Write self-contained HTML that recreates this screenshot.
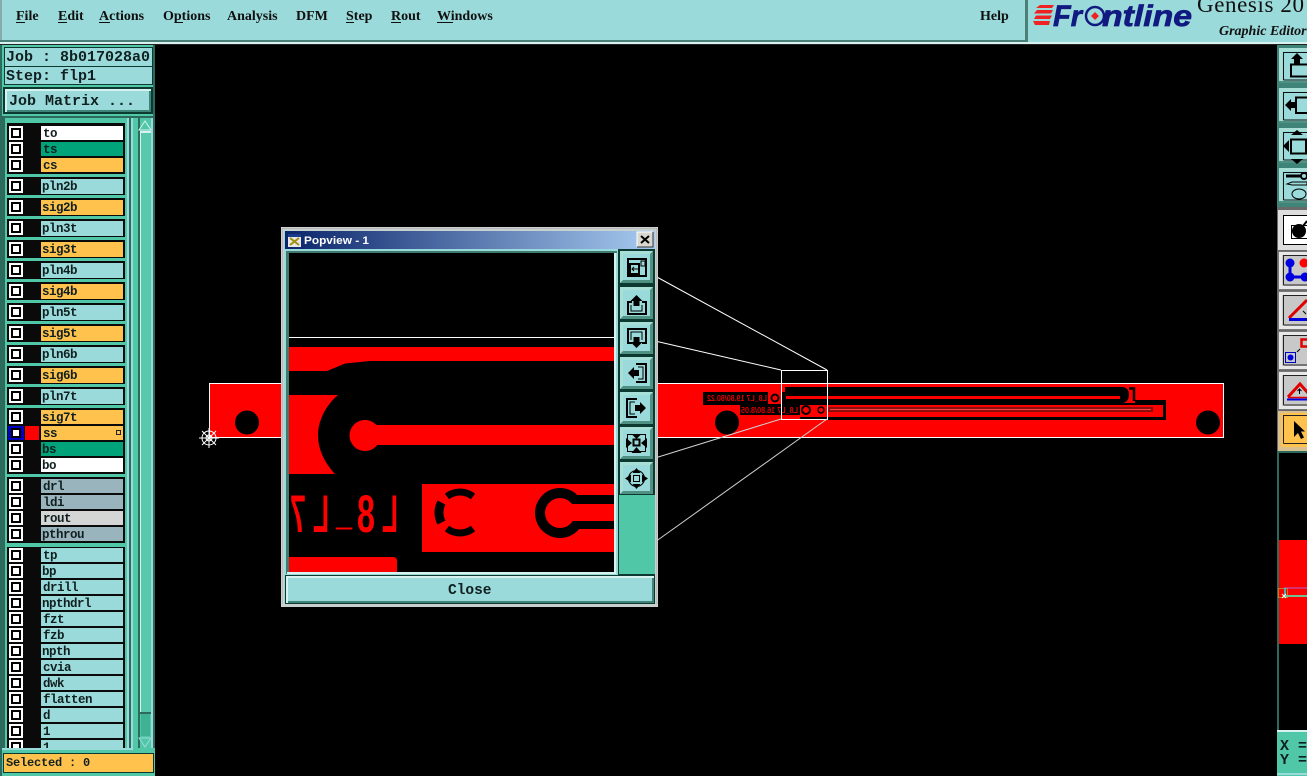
<!DOCTYPE html>
<html><head><meta charset="utf-8"><title>Genesis 2000 Graphic Editor</title>
<style>
html,body{margin:0;padding:0;background:#000;width:1307px;height:776px;overflow:hidden}
svg{display:block;position:absolute;left:0;top:0}
.m{font:bold 14px "Liberation Serif",serif;fill:#101010}
.l{font:bold 12.5px "Liberation Mono",monospace;fill:#102020;letter-spacing:-.5px}
.j{font:bold 15px "Liberation Mono",monospace;fill:#102020;letter-spacing:0}
.k{fill:none;stroke:#000;stroke-width:2}
</style></head><body>
<svg width="1307" height="776" viewBox="0 0 1307 776" xmlns="http://www.w3.org/2000/svg">
<defs>
<g id="cb"><rect x="9" y="-7" width="14" height="14" fill="#fff"/><rect x="11" y="-5" width="10" height="10" fill="#000"/><rect x="13" y="-3" width="6" height="6" fill="#fff"/></g>
<g id="b"><rect x="-19" y="-18" width="37" height="35" fill="#0c3a30"/><rect x="-17" y="-16" width="33" height="32" fill="#4f9284"/><path d="M-17 16V-16H16L13 -13H-14V13Z" fill="#a8e0d8"/><rect x="-14" y="-13" width="27" height="26" fill="#9bdada"/></g>
<g id="rb"><rect x="0" y="0" width="30" height="38" fill="#3f8478"/><rect x="1" y="1" width="29" height="35" fill="#a8e0d8"/><rect x="4" y="4" width="26" height="30" fill="#9bdada"/><rect x="1" y="34" width="29" height="2" fill="#4f9284"/><path d="M5.500 33V5.500H30M5.500 33H30" fill="none" stroke="#111" stroke-width="1"/></g>
<g id="gb"><rect x="0" y="0" width="30" height="39" fill="#777"/><rect x="1" y="1" width="29" height="37" fill="#e8e8e8"/><rect x="4" y="4" width="26" height="31" fill="#c8c8c8"/><path d="M5.500 34V4.500H30M5.500 34H30" fill="none" stroke="#222" stroke-width="1"/></g>
</defs>

<rect width="1307" height="776" fill="#000"/>

<!-- board -->
<rect x="209.500" y="383.500" width="1014" height="54" fill="#ff0000" stroke="#fff" stroke-width="1"/>
<circle cx="247" cy="422.500" r="12" fill="#000"/><circle cx="727" cy="422.500" r="12" fill="#000"/><circle cx="1208" cy="422.500" r="12" fill="#000"/>
<path d="M703 392H785V387H1123Q1129 388 1129 395Q1129 401 1123 403H1135V400H1166V420H800V415H740V405H703Z" fill="#000"/>
<path d="M1129 388.500H1134V401" fill="none" stroke="#000" stroke-width="2.500"/>
<rect x="786" y="396" width="334" height="3" fill="#ff0000"/>
<rect x="768" y="392" width="13" height="12" fill="#ff0000"/><circle cx="775" cy="398" r="3.500" fill="none" stroke="#000" stroke-width="2"/>
<rect x="800" y="405" width="363" height="12" fill="#ff0000"/>
<rect x="828" y="407" width="325" height="5" fill="#8a1010"/><rect x="830" y="409" width="321" height="1" fill="#ff4040"/>
<circle cx="806" cy="410" r="4" fill="none" stroke="#000" stroke-width="2"/><circle cx="821" cy="410" r="3" fill="none" stroke="#000" stroke-width="1.500"/>
<g font-family="Liberation Sans,sans-serif" font-size="8" font-weight="bold" fill="#e00000">
<text transform="translate(767,401) scale(-1,1)" textLength="60" lengthAdjust="spacingAndGlyphs">L8_L7 19.80/80.22</text>
<text transform="translate(798,413) scale(-1,1)" textLength="57" lengthAdjust="spacingAndGlyphs">L8_L7 16.80/8.05</text>
</g>

<!-- zoom lines -->
<g stroke="#fff" stroke-width="1" fill="none">
<path d="M781.500 370.500H827.500V419.500H781.500Z"/>
<path d="M655 276L827 370"/><path d="M655 341L781 370"/>
<path d="M655 458L781 419" stroke="#d0d0d0"/><path d="M655 542L827 419" stroke="#d0d0d0"/>
</g>

<!-- origin crosshair -->
<g stroke="#fff" stroke-width="1" fill="none"><circle cx="209" cy="438" r="7"/><circle cx="209" cy="438" r="3"/><path d="M199 438H219M209 428V448M202 431L216 445M216 431L202 445"/></g>

<!-- top menu bar -->
<rect width="1307" height="42" fill="#9bdada"/>
<rect x="0" y="0" width="2" height="42" fill="#8aa"/>
<rect x="0" y="40" width="1025" height="2" fill="#4a8078"/>
<rect x="1025" y="0" width="3" height="44" fill="#4a8078"/>
<rect x="0" y="42" width="1307" height="2" fill="#d8f2f0"/>
<rect x="0" y="44" width="1307" height="1" fill="#222"/>
<text class="m" x="16" y="20">File</text><text class="m" x="58" y="20">Edit</text><text class="m" x="99" y="20">Actions</text><text class="m" x="163" y="20">Options</text><text class="m" x="227" y="20">Analysis</text><text class="m" x="296" y="20">DFM</text><text class="m" x="346" y="20">Step</text><text class="m" x="391" y="20">Rout</text><text class="m" x="437" y="20">Windows</text><text class="m" x="980" y="20">Help</text>
<g fill="#101010"><rect x="16" y="22" width="9" height="1"/><rect x="58" y="22" width="9" height="1"/><rect x="99" y="22" width="11" height="1"/><rect x="176" y="22" width="7" height="1"/><rect x="346" y="22" width="8" height="1"/><rect x="391" y="22" width="10" height="1"/><rect x="437" y="22" width="16" height="1"/></g>

<!-- logo -->
<g fill="#ee2222"><path d="M1040 5H1054L1052 8H1036Z"/><path d="M1037 10H1053L1051 13.500H1034Z"/><path d="M1036 15.500H1052L1050 19H1034Z"/><path d="M1033 21H1050L1049 25H1035Z"/></g>
<g font-family="Liberation Sans,sans-serif" font-weight="bold" font-style="italic" font-size="30" fill="#101a80" stroke="#101a80" stroke-width=".7">
<text x="1053" y="26" textLength="29" lengthAdjust="spacingAndGlyphs">Fr</text>
<text x="1102" y="26" textLength="90" lengthAdjust="spacingAndGlyphs">ntline</text>
</g>
<circle cx="1095" cy="16" r="9" fill="none" stroke="#101a80" stroke-width="2.500"/><path d="M1095 12l4 4-4 4-4-4z" fill="#ee2222"/>
<text x="1197" y="12" font-family="Liberation Serif,serif" font-size="23" fill="#101010" letter-spacing=".6">Genesis 20</text>
<text x="1219" y="35" font-family="Liberation Serif,serif" font-size="14" font-weight="bold" font-style="italic" fill="#101010">Graphic Editor</text>

<!-- left panel -->
<rect x="0" y="45" width="155" height="731" fill="#50c8a8"/>
<rect x="0" y="45" width="2" height="731" fill="#2d6a5e"/>
<rect x="153" y="45" width="2" height="731" fill="#2d6a5e"/>
<rect x="4" y="47" width="149" height="20" fill="#0c3a30"/><rect x="5" y="48" width="147" height="18" fill="#9bdada"/>
<rect x="4" y="66" width="149" height="19" fill="#0c3a30"/><rect x="5" y="67" width="147" height="17" fill="#9bdada"/>
<text class="j" x="6" y="61">Job : 8b017028a0</text>
<text class="j" x="6" y="80">Step: flp1</text>
<rect x="3" y="87" width="150" height="27" fill="#0c3a30"/><rect x="5" y="89" width="146" height="23" fill="#d8f2f0"/><rect x="7" y="91" width="144" height="21" fill="#3f8478"/><rect x="7" y="91" width="142" height="19" fill="#9bdada"/>
<text class="j" x="9" y="105">Job Matrix ...</text>

<rect x="0" y="116" width="155" height="2" fill="#2d6a5e"/>
<rect x="0" y="118" width="5" height="632" fill="#2d6a5e"/>
<rect x="125" y="118" width="2" height="630" fill="#50c8a8"/>
<rect x="127" y="118" width="2" height="630" fill="#9bdada"/>
<rect x="129" y="118" width="2" height="630" fill="#2d6a5e"/>
<rect x="131" y="118" width="2" height="630" fill="#9bdada"/>
<rect x="133" y="118" width="5" height="630" fill="#50c8a8"/>
<rect x="138" y="118" width="2" height="630" fill="#2d6a5e"/>
<rect x="140" y="118" width="11" height="630" fill="#50c8a8"/>
<rect x="140" y="131" width="1" height="582" fill="#d8f2f0"/>
<rect x="141" y="131" width="9" height="582" fill="#58c9ac"/>
<rect x="140" y="712" width="11" height="2" fill="#2d6a5e"/>
<rect x="141" y="714" width="9" height="22" fill="#3fb294"/>
<rect x="151" y="118" width="2" height="630" fill="#9bdada"/>
<path d="M145 121L151 130H139Z" fill="#50c8a8" stroke="#d8f2f0"/>
<rect x="140" y="131" width="11" height="2" fill="#d8f2f0"/>
<path d="M145 747L151 738H139Z" fill="#50c8a8" stroke="#9bdada"/>

<g fill="#0a0a0a">
<rect x="7" y="123" width="118" height="51"/>
<rect x="7" y="177" width="118" height="18"/><rect x="7" y="198" width="118" height="18"/><rect x="7" y="219" width="118" height="18"/><rect x="7" y="240" width="118" height="18"/><rect x="7" y="261" width="118" height="18"/><rect x="7" y="282" width="118" height="18"/><rect x="7" y="303" width="118" height="18"/><rect x="7" y="324" width="118" height="18"/><rect x="7" y="345" width="118" height="18"/><rect x="7" y="366" width="118" height="18"/><rect x="7" y="387" width="118" height="18"/>
<rect x="7" y="408" width="118" height="66"/><rect x="7" y="477" width="118" height="66"/><rect x="7" y="547" width="118" height="202"/>
</g>

<g transform="translate(0,133)"><use href="#cb"/><rect x="41" y="-7" width="82" height="14" fill="#fff"/><text class="l" x="43" y="4">to</text></g>
<g transform="translate(0,149)"><use href="#cb"/><rect x="41" y="-7" width="82" height="14" fill="#00a37a"/><text class="l" x="43" y="4">ts</text></g>
<g transform="translate(0,165)"><use href="#cb"/><rect x="41" y="-7" width="82" height="14" fill="#ffc24d"/><text class="l" x="43" y="4">cs</text></g>
<g transform="translate(0,186)"><use href="#cb"/><rect x="41" y="-7" width="82" height="15" fill="#9bdada"/><text class="l" x="42" y="4">pln2b</text></g>
<g transform="translate(0,207)"><use href="#cb"/><rect x="41" y="-7" width="82" height="15" fill="#ffc24d"/><text class="l" x="42" y="4">sig2b</text></g>
<g transform="translate(0,228)"><use href="#cb"/><rect x="41" y="-7" width="82" height="15" fill="#9bdada"/><text class="l" x="42" y="4">pln3t</text></g>
<g transform="translate(0,249)"><use href="#cb"/><rect x="41" y="-7" width="82" height="15" fill="#ffc24d"/><text class="l" x="42" y="4">sig3t</text></g>
<g transform="translate(0,270)"><use href="#cb"/><rect x="41" y="-7" width="82" height="15" fill="#9bdada"/><text class="l" x="42" y="4">pln4b</text></g>
<g transform="translate(0,291)"><use href="#cb"/><rect x="41" y="-7" width="82" height="15" fill="#ffc24d"/><text class="l" x="42" y="4">sig4b</text></g>
<g transform="translate(0,312)"><use href="#cb"/><rect x="41" y="-7" width="82" height="15" fill="#9bdada"/><text class="l" x="42" y="4">pln5t</text></g>
<g transform="translate(0,333)"><use href="#cb"/><rect x="41" y="-7" width="82" height="15" fill="#ffc24d"/><text class="l" x="42" y="4">sig5t</text></g>
<g transform="translate(0,354)"><use href="#cb"/><rect x="41" y="-7" width="82" height="15" fill="#9bdada"/><text class="l" x="42" y="4">pln6b</text></g>
<g transform="translate(0,375)"><use href="#cb"/><rect x="41" y="-7" width="82" height="15" fill="#ffc24d"/><text class="l" x="42" y="4">sig6b</text></g>
<g transform="translate(0,396)"><use href="#cb"/><rect x="41" y="-7" width="82" height="15" fill="#9bdada"/><text class="l" x="42" y="4">pln7t</text></g>
<g transform="translate(0,417)"><use href="#cb"/><rect x="41" y="-7" width="82" height="14" fill="#ffc24d"/><text class="l" x="42" y="4">sig7t</text></g>
<g transform="translate(0,433)"><rect x="8" y="-7" width="16" height="14" fill="#0000c0"/><rect x="11" y="-5" width="10" height="10" fill="#000"/><rect x="13" y="-3" width="6" height="6" fill="#fff"/><rect x="25" y="-7" width="14" height="14" fill="#ff0000"/><rect x="41" y="-7" width="82" height="14" fill="#ffc24d"/><text class="l" x="43" y="4">ss</text><rect x="116.500" y="-2.500" width="4" height="4" fill="none" stroke="#222"/></g>
<g transform="translate(0,449)"><use href="#cb"/><rect x="41" y="-7" width="82" height="14" fill="#00a37a"/><text class="l" x="42" y="4">bs</text></g>
<g transform="translate(0,465)"><use href="#cb"/><rect x="41" y="-7" width="82" height="14" fill="#fff"/><text class="l" x="42" y="4">bo</text></g>
<g transform="translate(0,486)"><use href="#cb"/><rect x="41" y="-7" width="82" height="14" fill="#9ab4bd"/><text class="l" x="43" y="4">drl</text></g>
<g transform="translate(0,502)"><use href="#cb"/><rect x="41" y="-7" width="82" height="14" fill="#9ab4bd"/><text class="l" x="43" y="4">ldi</text></g>
<g transform="translate(0,518)"><use href="#cb"/><rect x="41" y="-7" width="82" height="14" fill="#d4d6d6"/><text class="l" x="43" y="4">rout</text></g>
<g transform="translate(0,534)"><use href="#cb"/><rect x="41" y="-7" width="82" height="14" fill="#9ab4bd"/><text class="l" x="42" y="4">pthrou</text></g>
<g transform="translate(0,555)"><use href="#cb"/><rect x="41" y="-7" width="82" height="14" fill="#9bdada"/><text class="l" x="43" y="4">tp</text></g>
<g transform="translate(0,571)"><use href="#cb"/><rect x="41" y="-7" width="82" height="14" fill="#9bdada"/><text class="l" x="42" y="4">bp</text></g>
<g transform="translate(0,587)"><use href="#cb"/><rect x="41" y="-7" width="82" height="14" fill="#9bdada"/><text class="l" x="43" y="4">drill</text></g>
<g transform="translate(0,603)"><use href="#cb"/><rect x="41" y="-7" width="82" height="14" fill="#9bdada"/><text class="l" x="42" y="4">npthdrl</text></g>
<g transform="translate(0,619)"><use href="#cb"/><rect x="41" y="-7" width="82" height="14" fill="#9bdada"/><text class="l" x="43" y="4">fzt</text></g>
<g transform="translate(0,635)"><use href="#cb"/><rect x="41" y="-7" width="82" height="14" fill="#9bdada"/><text class="l" x="43" y="4">fzb</text></g>
<g transform="translate(0,651)"><use href="#cb"/><rect x="41" y="-7" width="82" height="14" fill="#9bdada"/><text class="l" x="42" y="4">npth</text></g>
<g transform="translate(0,667)"><use href="#cb"/><rect x="41" y="-7" width="82" height="14" fill="#9bdada"/><text class="l" x="43" y="4">cvia</text></g>
<g transform="translate(0,683)"><use href="#cb"/><rect x="41" y="-7" width="82" height="14" fill="#9bdada"/><text class="l" x="43" y="4">dwk</text></g>
<g transform="translate(0,699)"><use href="#cb"/><rect x="41" y="-7" width="82" height="14" fill="#9bdada"/><text class="l" x="43" y="4">flatten</text></g>
<g transform="translate(0,715)"><use href="#cb"/><rect x="41" y="-7" width="82" height="14" fill="#9bdada"/><text class="l" x="43" y="4">d</text></g>
<g transform="translate(0,731)"><use href="#cb"/><rect x="41" y="-7" width="82" height="14" fill="#9bdada"/><text class="l" x="43" y="4">1</text></g>
<g transform="translate(0,747)"><use href="#cb"/><rect x="41" y="-7" width="82" height="14" fill="#9bdada"/><text class="l" x="43" y="4">1...</text></g>

<rect x="0" y="748" width="155" height="28" fill="#50c8a8"/>
<rect x="0" y="748" width="2" height="28" fill="#2d6a5e"/>
<rect x="2" y="748" width="131" height="2" fill="#9bdada"/>
<rect x="3" y="753" width="151" height="20" fill="#0c3a30"/><rect x="4" y="754" width="149" height="18" fill="#ffc24d"/>
<text x="6" y="766" font-family="Liberation Mono,monospace" font-weight="bold" font-size="12" fill="#102020" letter-spacing="-.2">Selected : 0</text>

<!-- right panel -->
<rect x="1277" y="45" width="30" height="162" fill="#3f8478"/>
<use href="#rb" x="1278" y="47"/><use href="#rb" x="1278" y="87"/><use href="#rb" x="1278" y="127"/><use href="#rb" x="1278" y="167"/>
<g class="k">
<path d="M1307 64.500H1291V76.500H1307"/>
<path d="M1307 97.500H1296V113H1307"/>
<rect x="1291" y="139.500" width="15" height="14"/>
</g>
<path d="M1297 53l6 6h-3v5h-6v-5h-3z" fill="#000"/>
<path d="M1285 105l6-6v3h5v6h-5v3z" fill="#000"/>
<path d="M1283 146l6-6v12zM1297 130l6 5h-12zM1297 164l6-5h-12z" fill="#000"/>
<path d="M1286 176h16" stroke="#000" stroke-width="3"/><circle cx="1304" cy="176" r="3" fill="none" stroke="#000" stroke-width="2"/><path d="M1287 184l5-2h15v3h-15z" fill="none" stroke="#000"/><ellipse cx="1299" cy="194" rx="7" ry="5" fill="none" stroke="#000"/>

<rect x="1277" y="207" width="30" height="245" fill="#6a6a6a"/>
<rect x="1278" y="210" width="29" height="40" fill="#ddd"/><rect x="1283.500" y="215.500" width="25" height="29" fill="#fff" stroke="#000"/>
<rect x="1291.500" y="225.500" width="17" height="13" fill="none" stroke="#000"/><circle cx="1299" cy="231" r="7" fill="#000"/><path d="M1303 226l4-5" stroke="#000" stroke-width="2"/>
<use href="#gb" x="1278" y="251"/><use href="#gb" x="1278" y="291"/><use href="#gb" x="1278" y="331"/><use href="#gb" x="1278" y="371"/>
<g fill="#0000e0"><circle cx="1290" cy="263" r="4.500"/><circle cx="1290" cy="277" r="4.500"/><circle cx="1305" cy="277" r="4.500"/></g><path d="M1290 263v14h15" stroke="#0000e0" stroke-width="3" fill="none"/><circle cx="1304" cy="263" r="4.500" fill="#ff0000"/>
<path d="M1289 318l18-18" stroke="#e00000" stroke-width="3"/><path d="M1289 319.500h18" stroke="#0000e0" stroke-width="3"/><path d="M1303 311l3 3" stroke="#000"/>
<rect x="1285.500" y="352.500" width="10" height="10" fill="none" stroke="#0000c0"/><circle cx="1290.500" cy="357.500" r="3" fill="#0000e0"/><rect x="1301.500" y="339.500" width="7" height="7" fill="none" stroke="#e00000" stroke-width="2.500"/><path d="M1297 352l3-3" stroke="#000"/>
<path d="M1288 397l12-13 8 9" stroke="#e00000" stroke-width="3" fill="none"/><path d="M1287 399.500h20" stroke="#0000e0" stroke-width="2"/><path d="M1288 397.500h19" stroke="#e00000" stroke-width="1.500"/><path d="M1299.500 394v-5m-2 2l2-2 2 2" stroke="#000" fill="none"/>
<rect x="1278" y="411" width="29" height="40" fill="#d8c090"/><rect x="1281" y="413" width="26" height="34" fill="#ffc24d"/><path d="M1283.500 443.500V415.500H1307M1283.500 443.500H1307" fill="none" stroke="#222"/>
<path d="M1294 421V437L1298 433L1301 439L1304 437.500L1301 431.500H1305Z" fill="#000"/>

<!-- minimap -->
<rect x="1277" y="451" width="30" height="2" fill="#2d6a5e"/><rect x="1277" y="453" width="2" height="278" fill="#2d6a5e"/>
<rect x="1279" y="540" width="28" height="104" fill="#ff0000"/>
<rect x="1278.500" y="588.500" width="9" height="9" fill="none" stroke="#c08020"/>
<path d="M1284 588h23" stroke="#b060d0"/><path d="M1285 596h22" stroke="#70c090" stroke-width="2"/><path d="M1285 588v8" stroke="#20e0f0" stroke-width="1.500"/>
<path d="M1282 594l4 4M1286 594l-4 4" stroke="#fff"/>
<rect x="1277" y="730" width="30" height="46" fill="#50c8a8"/><rect x="1277" y="730" width="30" height="2" fill="#d8f2f0"/><rect x="1277" y="773" width="30" height="2" fill="#9bdada"/>
<text x="1280" y="750" font-family="Liberation Mono,monospace" font-weight="bold" font-size="15" fill="#102020">X =</text>
<text x="1280" y="764" font-family="Liberation Mono,monospace" font-weight="bold" font-size="15" fill="#102020">Y =</text>

<!-- popup -->
<rect x="281" y="227" width="377" height="380" fill="#c8d0d0"/>
<rect x="281.500" y="227.500" width="376" height="379" fill="none" stroke="#e8e8e8"/>
<rect x="282" y="228" width="375" height="378" fill="none" stroke="#808080" stroke-width=".5"/>
<rect x="284" y="231" width="371" height="373" fill="#9bdada"/>
<linearGradient id="tg" x1="0" x2="1" y1="0" y2="0"><stop offset="0" stop-color="#0a246a"/><stop offset="1" stop-color="#a6caf0"/></linearGradient>
<rect x="285" y="231" width="370" height="18" fill="url(#tg)"/>
<rect x="288" y="234" width="13" height="13" fill="#e8e8e8"/><rect x="288" y="234" width="13" height="3" fill="#1a3a8a"/><path d="M290 238l9 7M299 238l-9 7" stroke="#a09010" stroke-width="2"/>
<text x="304" y="244" font-family="Liberation Sans,sans-serif" font-weight="bold" font-size="11" fill="#fff" textLength="65" lengthAdjust="spacingAndGlyphs">Popview - 1</text>
<rect x="637" y="232" width="16" height="15" fill="#d8d8d0"/><path d="M637 247V232H653" fill="none" stroke="#fff"/><path d="M637 247H653V232" fill="none" stroke="#333"/><path d="M641 236l8 7M649 236l-8 7" stroke="#000" stroke-width="2"/>
<rect x="285" y="251" width="333" height="325" fill="#9bdada"/>
<rect x="286" y="251" width="331" height="2" fill="#3f7a6e"/><rect x="286" y="251" width="3" height="323" fill="#3f7a6e"/>
<rect x="289" y="253" width="326" height="319" fill="#000"/>
<rect x="614" y="253" width="2" height="320" fill="#d8f2f0"/><rect x="287" y="572" width="329" height="2" fill="#d8f2f0"/>

<!-- popup drawing -->
<svg x="289" y="253" width="325" height="319" viewBox="289 253 325 319">
<rect x="289" y="337" width="325" height="1" fill="#fff"/>
<rect x="289" y="347" width="325" height="14" fill="#ff0000"/>
<path d="M289 361H370L345 363.500L327 371H289Z" fill="#ff0000"/>
<path d="M289 395H338C327 404 318 420 318 435C318 450 325 463 335 474H289Z" fill="#ff0000"/>
<circle cx="365" cy="435.500" r="15.500" fill="#ff0000"/>
<rect x="365" y="425" width="250" height="20" fill="#ff0000"/>
<rect x="422" y="484" width="193" height="68" fill="#ff0000"/>
<g fill="none" stroke="#000" stroke-width="7">
<path d="M441.500 502.500A21 21 0 0 0 441.500 522.500" stroke-width="9"/>
<path d="M447 496.500A21 21 0 0 1 473 496.500"/>
<path d="M447 528.500A21 21 0 0 0 473 528.500"/>
</g>
<circle cx="560" cy="513" r="25" fill="#000"/>
<rect x="575" y="495" width="40" height="34" fill="#000"/>
<circle cx="560" cy="513" r="15" fill="#ff0000"/>
<rect x="560" y="504" width="55" height="17" fill="#ff0000"/>
<path d="M289 572V557H393Q397 557 397 561V572Z" fill="#ff0000"/>
<g font-family="Liberation Sans,sans-serif" font-weight="bold" font-size="53" fill="#ff0000">
<text transform="translate(398,532) scale(-1,1)" textLength="16" lengthAdjust="spacingAndGlyphs">L</text>
<text transform="translate(375,532) scale(-1,1)" textLength="18" lengthAdjust="spacingAndGlyphs">8</text>
<text transform="translate(352,523) scale(-1,1)" textLength="16" lengthAdjust="spacingAndGlyphs">_</text>
<text transform="translate(329,532) scale(-1,1)" textLength="16" lengthAdjust="spacingAndGlyphs">L</text>
<text transform="translate(306,532) scale(-1,1)" textLength="16" lengthAdjust="spacingAndGlyphs">7</text>
</g>
</svg>

<!-- popup buttons -->
<rect x="618" y="250" width="37" height="325" fill="#0c3a30"/>
<rect x="619" y="495" width="36" height="79" fill="#50c8a8"/>
<use href="#b" x="637" y="267"/><use href="#b" x="637" y="303"/><use href="#b" x="637" y="338"/><use href="#b" x="637" y="373"/><use href="#b" x="637" y="408"/><use href="#b" x="637" y="443"/><use href="#b" x="637" y="478"/>
<g fill="none" stroke="#000" stroke-width="2">
<rect x="628" y="259" width="18" height="17"/><rect x="630" y="264" width="9" height="10"/><path d="M641 261h4v5h-4z" stroke-width="1"/><path d="M638 269h-6m2-2l-2 2 2 2" stroke-width="1"/>
<path d="M632 302h-4v12h18v-12h-4"/><path d="M631 305v6h11v-6" stroke-width="1"/>
<path d="M632 343h-4v-14h18v14h-4"/><path d="M631 340v-8h11v8" stroke-width="1"/>
<path d="M636 364h10v18h-10"/><path d="M638 367h5v12h-5" stroke-width="1"/>
<path d="M637 399h-10v18h10"/><path d="M635 402h-5v12h5" stroke-width="1"/>
<rect x="633.500" y="439.500" width="6" height="6"/><rect x="627.500" y="434.500" width="18" height="17" stroke-width="1"/>
<rect x="633.500" y="475.500" width="6" height="6" stroke-width="1"/><circle cx="636.500" cy="478.500" r="8" stroke-width="1"/>
</g>
<g fill="#000">
<path d="M636.500 295l6 6h-3v5h-6v-5h-3z"/>
<path d="M636.500 348l6-6h-3v-5h-6v5h-3z"/>
<path d="M628 373l6-6v3h5v6h-5v3z"/>
<path d="M646 408l-6-6v3h-5v6h5v3z"/>
<path d="M636.500 439l-5-5h10zM636.500 447l-5 6h10zM632 443l-6-5v10zM641 443l6-5v10z"/>
<path d="M636.500 468l-4 5h8zM636.500 489l-4-5h8zM625 478.500l6-4v8zM648 478.500l-6-4v8z"/>
</g>

<!-- close button -->
<rect x="285" y="575" width="370" height="30" fill="#0c3a30"/>
<rect x="286" y="576" width="368" height="27" fill="#d8f2f0"/>
<rect x="288" y="578" width="366" height="25" fill="#3f8478"/>
<rect x="288" y="578" width="364" height="23" fill="#9bdada"/>
<text x="448" y="594" font-family="Liberation Mono,monospace" font-weight="bold" font-size="14.500" fill="#102020">Close</text>
<rect x="281" y="604" width="377" height="3" fill="#c8d0d0"/>
</svg>
</body></html>
